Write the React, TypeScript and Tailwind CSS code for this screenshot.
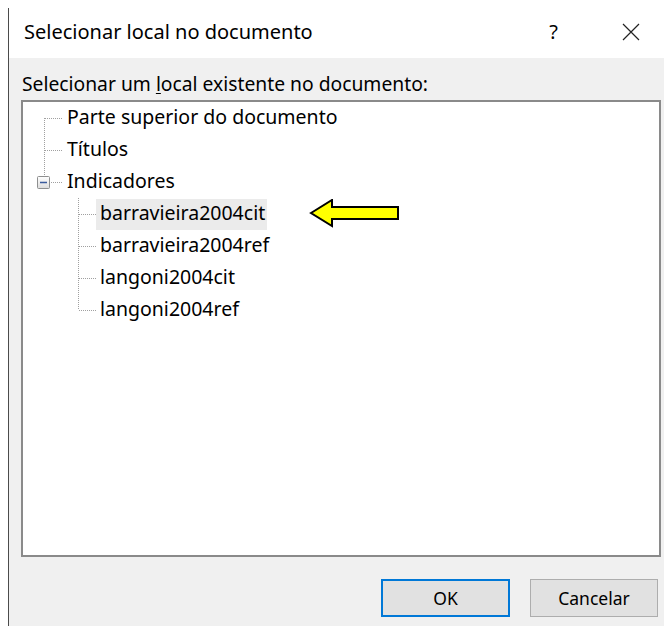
import React from 'react';

type Node = { label: string; level: 0 | 1; kind: 'first' | 'mid' | 'expander' | 'child' | 'lastChild'; selected?: boolean };

const nodes: Node[] = [
  { label: 'Parte superior do documento', level: 0, kind: 'first' },
  { label: 'Títulos', level: 0, kind: 'mid' },
  { label: 'Indicadores', level: 0, kind: 'expander' },
  { label: 'barravieira2004cit', level: 1, kind: 'child', selected: true },
  { label: 'barravieira2004ref', level: 1, kind: 'child' },
  { label: 'langoni2004cit', level: 1, kind: 'child' },
  { label: 'langoni2004ref', level: 1, kind: 'lastChild' },
];

const DOT = '#a0a0a0';

// dotted connector lines for one tree row (row is 32px tall)
function Connector({ node }: { node: Node }) {
  const w = node.level === 0 ? 40 : 73;
  const dots = { stroke: DOT, strokeWidth: 1, strokeDasharray: '1 1' };
  return (
    <svg width={w} height={32} className="shrink-0 block">
      {node.kind === 'first' && <line x1={21.5} y1={16} x2={21.5} y2={32} {...dots} />}
      {node.kind === 'mid' && <line x1={21.5} y1={0} x2={21.5} y2={32} {...dots} />}
      {node.kind === 'expander' && <line x1={21.5} y1={0} x2={21.5} y2={10} {...dots} />}
      {node.kind === 'child' && <line x1={55.5} y1={0} x2={55.5} y2={32} {...dots} />}
      {node.kind === 'lastChild' && <line x1={55.5} y1={0} x2={55.5} y2={16} {...dots} />}
      {node.kind === 'expander' && <line x1={55.5} y1={24} x2={55.5} y2={32} {...dots} />}
      {node.level === 0 && node.kind !== 'expander' && <line x1={22} y1={16.5} x2={40} y2={16.5} {...dots} />}
      {node.level === 1 && <line x1={56} y1={16.5} x2={73} y2={16.5} {...dots} />}
      {node.kind === 'expander' && (
        <>
          <defs>
            <linearGradient id="exp" x1="0" y1="0" x2="0" y2="1">
              <stop offset="0" stopColor="#ffffff" />
              <stop offset="1" stopColor="#dcdcdc" />
            </linearGradient>
          </defs>
          <rect x={14.5} y={10.5} width={12} height={12} rx={1} fill="url(#exp)" stroke="#8e8f8f" />
          <line x1={17} y1={16.5} x2={24} y2={16.5} stroke="#3b5b9c" strokeWidth={1.5} />
          <line x1={28} y1={16.5} x2={40} y2={16.5} {...dots} />
        </>
      )}
    </svg>
  );
}

function LeftArrow() {
  return (
    <svg width={92} height={30} viewBox="0 0 92 30" className="block">
      <path d="M2 14 L23 1 L23 8 L89 8 L89 20 L23 20 L23 27 Z" fill="#ffff00" stroke="#000" strokeWidth={2} strokeLinejoin="miter" />
    </svg>
  );
}

export default function App() {
  return (
    <div
      className="w-[664px] h-[626px] bg-white flex overflow-hidden text-black"
      style={{ fontFamily: '"Noto Sans", "Open Sans", Arial, sans-serif' }}
    >
      <div className="w-2 shrink-0" />
      {/* edge of the window behind */}
      <div className="w-[1px] mt-2 bg-[#4b4b4b] shrink-0" />

      <div className="flex-1 flex flex-col">
        {/* title bar */}
        <div className="h-[58px] flex items-center bg-white pl-[15px] pt-[6px]">
          <span className="text-[20px]">Selecionar local no documento</span>
          <span className="ml-auto text-[20px] mr-[64px]">?</span>
          <svg width={18} height={18} className="mr-[24px]">
            <path d="M1 1 L17 17 M17 1 L1 17" stroke="#222" strokeWidth={1.2} />
          </svg>
        </div>

        {/* body */}
        <div className="flex-1 bg-[#f0f0f0] pl-[12px] pr-[3px] flex flex-col">
          <div className="pt-[14px] pl-px h-[42px] text-[19.3px] leading-6">
            Selecionar um <span className="underline underline-offset-2">l</span>ocal existente no documento:
          </div>

          <div className="h-[457px] bg-white border-2 border-[#8a8a8a]">
            {nodes.map((n) => (
              <div key={n.label} className="flex items-center h-8">
                <Connector node={n} />
                <span
                  className={`h-[31px] flex items-center pl-1 pr-0.5 pb-[2px] text-[19.5px] ${n.selected ? 'bg-[#ebebeb]' : ''}`}
                >
                  {n.label}
                </span>
                {n.selected && (
                  <div className="ml-[42px]">
                    <LeftArrow />
                  </div>
                )}
              </div>
            ))}
          </div>

          {/* buttons */}
          <div className="flex justify-end gap-5 pt-[22px] pr-[3px]">
            <button className="w-[129px] h-[38px] bg-[#e1e1e1] border-2 border-[#0078d7] text-[17.5px]">OK</button>
            <button className="w-[128px] h-[38px] bg-[#e1e1e1] border border-[#adadad] text-[17.5px]">Cancelar</button>
          </div>
        </div>
      </div>
    </div>
  );
}
